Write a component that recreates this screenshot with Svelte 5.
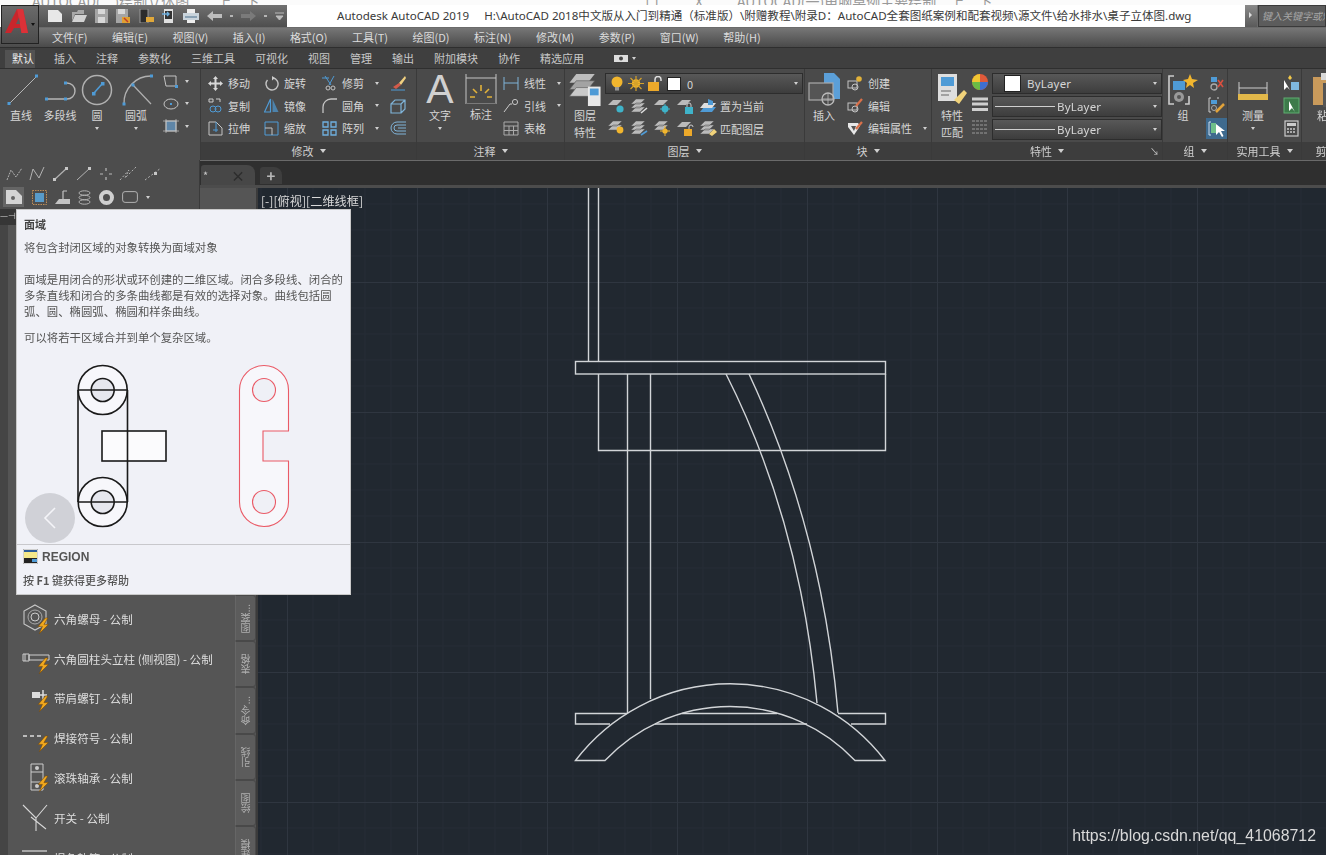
<script lang="ts">
  const menus = ['文件(F)', '编辑(E)', '视图(V)', '插入(I)', '格式(O)', '工具(T)', '绘图(D)', '标注(N)', '修改(M)', '参数(P)', '窗口(W)', '帮助(H)'];
  const tabs = ['默认', '插入', '注释', '参数化', '三维工具', '可视化', '视图', '管理', '输出', '附加模块', '协作', '精选应用'];
  const sideTabs = [
    { label: '图案...', h: 46 },
    { label: '表格', h: 46 },
    { label: '命令...', h: 47 },
    { label: '引线', h: 46 },
    { label: '绘图', h: 46 },
    { label: '建模', h: 46 }
  ];
  const paletteItems = [
    { label: '六角螺母 - 公制', kind: 'nut' },
    { label: '六角圆柱头立柱 (侧视图) - 公制', kind: 'post' },
    { label: '带肩螺钉 - 公制', kind: 'screw' },
    { label: '焊接符号 - 公制', kind: 'weld' },
    { label: '滚珠轴承 - 公制', kind: 'bearing' },
    { label: '开关 - 公制', kind: 'switch' },
    { label: '堤角轨算 - 公制', kind: 'last' }
  ];
</script>

{#snippet caret()}
  <i class="caret"></i>
{/snippet}

{#snippet bolt()}
  <path d="M7 0 L1 7 L4.5 7 L2 13 L9.5 5.5 L5.8 5.5 L9 0 Z" fill="#f0a81e" stroke="#7a4c08" stroke-width="0.5" />
{/snippet}

<div class="app">
  <div class="behind">
    <span class="behind-a">AUTOCAD(二)绘制立体图　　上　下</span>
    <span class="behind-b">口</span>
    <span class="behind-c">X</span>
    <span class="behind-d">AUTOCAD(一)电脑桌例主要绘制　上　下</span>
  </div>

  <header class="titlebar">
    <div class="qat">
      <svg width="16" height="14" viewBox="0 0 16 14"><path d="M1 1 H11 L15 5 V13 H1 Z" fill="#e8e8e8" /></svg>
      <svg width="16" height="14" viewBox="0 0 16 14"><path d="M1 3 H6 L7 1 H13 V5 H4 L1 12 Z" fill="#a9a9a9" /><path d="M4 6 H16 L13 13 H1 Z" fill="#d2d2d2" /></svg>
      <svg width="13" height="14" viewBox="0 0 13 14"><path d="M0 0 H13 V14 H0 Z" fill="#a5a5a5" /><path d="M3 0 H10 V5 H3 Z M3 8 H10 V14 H3 Z" fill="#d8d8d8" /></svg>
      <svg width="15" height="14" viewBox="0 0 15 14"><path d="M0 0 H12 V14 H0 Z" fill="#a5a5a5" /><path d="M2 0 H9 V5 H2 Z" fill="#d8d8d8" /><path d="M6 8 L14 8 L14 14 L6 14 Z" fill="#e0a030" /><path d="M8 9 L12 13" stroke="#c0392b" stroke-width="1.4" /></svg>
      <svg width="15" height="14" viewBox="0 0 15 14"><path d="M1 0 H9 V14 H1 Z" fill="#2c2c2c" stroke="#999" /><path d="M7 8 H15 V13 H7 Z" fill="#e0a83a" /></svg>
      <svg width="13" height="14" viewBox="0 0 13 14"><path d="M2 0 H11 V14 H2 Z" fill="#e0e0e0" /><path d="M3 2 H10 V10 H3 Z" fill="#333" /><path d="M0 5 H7 M5 3 L7 5 L5 7" stroke="#6fb0e0" stroke-width="1.4" fill="none" /></svg>
      <svg width="16" height="14" viewBox="0 0 16 14"><path d="M4 0 H12 V4 H4 Z M4 10 H12 V14 H4 Z" fill="#eee" /><path d="M0 4 H16 V11 H0 Z" fill="#c9d4dc" /><path d="M2 8 H14" stroke="#6d8ca3" stroke-width="1.4" /></svg>
      <svg width="15" height="10" viewBox="0 0 15 10"><path d="M6 0 L0 5 L6 10 V7 H15 V3 H6 Z" fill="#bdbdbd" /></svg>
      <i class="dot"></i>
      <svg width="15" height="10" viewBox="0 0 15 10"><path d="M9 0 L15 5 L9 10 V7 H0 V3 H9 Z" fill="#7a7a7a" /></svg>
      <i class="dot"></i>
      <svg width="9" height="9" viewBox="0 0 9 9"><path d="M0 1 H9 M1 4 H8 L4.5 8 Z" stroke="#bbb" fill="#bbb" /></svg>
    </div>
    <div class="doc-title">Autodesk AutoCAD 2019&nbsp;&nbsp;&nbsp;&nbsp; H:\AutoCAD 2018中文版从入门到精通（标准版）\附赠教程\附录D：AutoCAD全套图纸案例和配套视频\源文件\给水排水\桌子立体图.dwg</div>
    <div class="search-wrap">
      <div class="search-arrow"></div>
      <div class="search">键入关键字或短语</div>
    </div>
  </header>

  <button class="app-btn" aria-label="应用程序菜单">
    <svg width="24" height="26" viewBox="0 0 24 26"><path d="M0 25 L12 1 H18 L23 25 H16.5 L15.6 20 H9 L6 25 Z" fill="#c8262c" /><path d="M12 1 H18 L23 25 H16.5 Z" fill="#dc3138" /><path d="M11 16 H15 L14 9.5 Z" fill="#5c5c5c" /></svg>
    <i class="caret dark"></i>
  </button>

  <nav class="menubar">
    {#each menus as m}<span>{m}</span>{/each}
  </nav>

  <nav class="tabbar">
    {#each tabs as t, i}<span class:active={i === 0}>{t}</span>{/each}
    <svg class="cam" width="14" height="8" viewBox="0 0 14 8"><path d="M0 1 H14 V8 H0 Z" fill="#ddd" /><circle cx="7" cy="4.5" r="2" fill="#444" /></svg>
    <i class="caret"></i>
  </nav>

  <section class="ribbon">
    <!-- 绘图 -->
    <div class="panel p-draw">
      <div class="body draw-body">
        <div class="big w40">
          <svg width="34" height="34" viewBox="0 0 34 34" class="i"><path d="M5 31 L33 3" stroke="#b5b5b5" /><rect x="3.5" y="29" width="3" height="3" fill="#4f9bd6" stroke="none" /><rect x="31" y="1.5" width="3" height="3" fill="#4f9bd6" stroke="none" /></svg>
          <span>直线</span>
        </div>
        <div class="big w38">
          <svg width="34" height="34" viewBox="0 0 34 34" class="i"><path d="M3 26 H24 A8 8 0 0 0 24 10 H22" stroke="#b5b5b5" stroke-width="1.4" /><rect x="2" y="24.5" width="3" height="3" fill="#4f9bd6" stroke="none" /><rect x="21" y="24.5" width="3" height="3" fill="#4f9bd6" stroke="none" /><rect x="21" y="8.5" width="3" height="3" fill="#4f9bd6" stroke="none" /></svg>
          <span>多段线</span>
        </div>
        <div class="big w36">
          <svg width="32" height="32" viewBox="0 0 32 32" class="i"><circle cx="16" cy="16" r="14.5" stroke="#b0b0b0" stroke-width="1.5" /><path d="M13 19 L21 10" stroke="#4f9bd6" stroke-width="1.6" /><rect x="11" y="18" width="3.5" height="3.5" fill="#4f9bd6" stroke="none" /><rect x="20" y="8" width="3.5" height="3.5" fill="#4f9bd6" stroke="none" /></svg>
          <span>圆</span>{@render caret()}
        </div>
        <div class="big w42">
          <svg width="34" height="34" viewBox="0 0 34 34" class="i"><path d="M5 31 A27 27 0 0 1 32 3" stroke="#b0b0b0" stroke-width="1.4" /><path d="M14 12 L32 31" stroke="#b0b0b0" stroke-width="1.2" /><rect x="3.5" y="29.5" width="3" height="3" fill="#4f9bd6" stroke="none" /><rect x="31" y="1.5" width="3" height="3" fill="#4f9bd6" stroke="none" /><rect x="12.5" y="10.5" width="3" height="3" fill="#4f9bd6" stroke="none" /></svg>
          <span>圆弧</span>{@render caret()}
        </div>
        <div class="draw-small">
          <div>
            <svg width="16" height="14" viewBox="0 0 16 14" class="i"><path d="M1 2 H13 V12 H3 Z" /><rect x="12" y="11" width="3" height="3" fill="#4f9bd6" stroke="none" /></svg>
            {@render caret()}
          </div>
          <div>
            <svg width="16" height="14" viewBox="0 0 16 14" class="i"><ellipse cx="8" cy="7" rx="7" ry="5" /><rect x="7" y="6" width="2" height="2" fill="#4f9bd6" stroke="none" /></svg>
            {@render caret()}
          </div>
          <div>
            <svg width="16" height="14" viewBox="0 0 16 14" class="i"><rect x="3" y="2" width="10" height="10" fill="#5f86a8" stroke="#bbb" /><path d="M0 2 H16 M0 12 H16 M3 0 V14 M13 0 V14" stroke-width="0.7" /></svg>
            {@render caret()}
          </div>
        </div>
      </div>
    </div>

    <!-- 修改 -->
    <div class="panel p-modify">
      <div class="body modify-grid">
        <div class="tool"><svg width="15" height="15" viewBox="0 0 15 15"><path d="M7.5 0 L10 3 H8.5 V6.5 H12 V5 L15 7.5 L12 10 V8.5 H8.5 V12 H10 L7.5 15 L5 12 H6.5 V8.5 H3 V10 L0 7.5 L3 5 V6.5 H6.5 V3 H5 Z" fill="#d8d8d8" /></svg><span>移动</span></div>
        <div class="tool"><svg width="15" height="15" viewBox="0 0 15 15" class="i"><path d="M9 2 A6 6 0 1 1 3.5 4" stroke-width="1.4" /><path d="M8 0 L11 2 L8 4.5 Z" fill="#ccc" stroke="none" /></svg><span>旋转</span></div>
        <div class="tool"><svg width="15" height="15" viewBox="0 0 15 15" class="i"><path d="M0 2 H7 M3 0 L9 9 M12 0 L7 9" stroke="#4f9bd6" /><circle cx="6" cy="12" r="2" /><circle cx="11" cy="12" r="2" /></svg><span>修剪</span>{@render caret()}</div>
        <svg class="i lone" width="16" height="16" viewBox="0 0 16 16"><path d="M9 8 L15 1 L16 3 L11 10 Z" fill="#f0d080" stroke="none" /><path d="M3 12 L9 8 L11 10 L6 14 Z" fill="#d25a4a" stroke="none" /><path d="M1 15 H15" stroke="#4f9bd6" /></svg>

        <div class="tool"><svg width="15" height="15" viewBox="0 0 15 15" class="i"><path d="M1 1 H5 V4 H1 Z M8 1 H12 M12 1 V4" stroke="#ccc" /><circle cx="5" cy="11" r="3" stroke="#4f9bd6" /><circle cx="10" cy="11" r="3" stroke="#4f9bd6" /></svg><span>复制</span></div>
        <div class="tool"><svg width="15" height="15" viewBox="0 0 15 15"><path d="M6.5 1 L0.5 14 H6.5 Z" fill="none" stroke="#4f9bd6" stroke-width="1.2" /><path d="M8.5 1 V14 H14.5 Z" fill="#4f9bd6" opacity="0.7" /></svg><span>镜像</span></div>
        <div class="tool"><svg width="15" height="15" viewBox="0 0 15 15" class="i"><path d="M1 15 V9 A8 8 0 0 1 9 1 H15" stroke-width="1.3" /></svg><span>圆角</span>{@render caret()}</div>
        <svg class="i lone" width="16" height="16" viewBox="0 0 16 16"><path d="M1 6 H11 V15 H1 Z M1 6 L5 2 H15 V11 L11 15 M11 6 L15 2" stroke="#7fb3d8" stroke-width="1.2" /></svg>

        <div class="tool"><svg width="15" height="15" viewBox="0 0 15 15" class="i"><path d="M1 1 H8 L14 7 V14 H1 Z" /><path d="M8 1 V7 M5 9 H10 M8 7 V11" stroke="#4f9bd6" /></svg><span>拉伸</span></div>
        <div class="tool"><svg width="15" height="15" viewBox="0 0 15 15" class="i"><path d="M1 1 H14 V14 H1 Z" stroke="#4f9bd6" /><path d="M1 7 H8 V14" /></svg><span>缩放</span></div>
        <div class="tool"><svg width="15" height="15" viewBox="0 0 15 15" class="i"><path d="M1 1 H6 V6 H1 Z M9 1 H14 V6 H9 Z M1 9 H6 V14 H1 Z M9 9 H14 V14 H9 Z" stroke="#6fb0e0" stroke-width="1.3" /></svg><span>阵列</span>{@render caret()}</div>
        <svg class="i lone" width="16" height="16" viewBox="0 0 16 16"><path d="M16 2 H7 A6 6 0 0 0 7 14 H16 M16 5 H7 A3 3 0 0 0 7 11 H16 M16 8 H8" stroke="#7fb3d8" /></svg>
      </div>
      <div class="foot">修改 {@render caret()}</div>
    </div>

    <!-- 注释 -->
    <div class="panel p-annot">
      <div class="body annot-body">
        <div class="big w40">
          <span class="letter">A</span>
          <span>文字</span>{@render caret()}
        </div>
        <div class="big w42">
          <svg class="dim" width="32" height="30" viewBox="0 0 32 30"><g fill="none" stroke="#c4c4c4"><path d="M1 0 V30 M31 0 V30 M1 4 H31" /><path d="M1 29.5 H31" stroke="#7a7a7a" /></g><path d="M16 11 V17 M8 15 L12 19 M24 15 L20 19 M5 23 H10 M22 23 H27" stroke="#e2b23a" stroke-width="1.6" /></svg>
          <span>标注</span>
        </div>
        <div class="annot-col">
          <div class="tool"><svg width="16" height="15" viewBox="0 0 16 15" class="i"><path d="M1 1 V14 M15 1 V14 M1 7 H15" stroke="#7fb3d8" /></svg><span>线性</span>{@render caret()}</div>
          <div class="tool"><svg width="16" height="15" viewBox="0 0 16 15" class="i"><path d="M1 14 L7 6 H9" stroke="#ccc" /><circle cx="12" cy="4" r="2.6" /></svg><span>引线</span>{@render caret()}</div>
          <div class="tool"><svg width="16" height="15" viewBox="0 0 16 15" class="i"><path d="M1 1 H15 V14 H1 Z M1 5 H15 M1 9.5 H15 M6 5 V14 M10.5 5 V14" stroke="#aaa" /></svg><span>表格</span></div>
        </div>
      </div>
      <div class="foot">注释 {@render caret()}</div>
    </div>

    <!-- 图层 -->
    <div class="panel p-layer">
      <div class="body layer-body">
        <div class="big w36 two-line">
          <svg width="33" height="35" viewBox="0 0 33 35"><path d="M0 10 L7 1 H26 L19 10 Z" fill="#bdbdbd" /><path d="M0 17 L7 8 H26 L19 17 Z" fill="#a3a3a3" stroke="#555" stroke-width=".6" /><path d="M0 24 L7 15 H26 L19 24 Z" fill="#c9c9c9" stroke="#555" stroke-width=".6" /><rect x="19" y="14" width="13" height="20" fill="#e8e8e8" /><rect x="21" y="16" width="9" height="7" fill="#4f9bd6" /></svg>
          <span>图层</span><span>特性</span>
        </div>
        <div class="layer-main">
          <div class="combo wide">
            <svg width="14" height="15" viewBox="0 0 14 15"><circle cx="7" cy="6" r="5.5" fill="#f2b62e" /><rect x="5" y="11" width="4" height="3.5" fill="#999" /></svg>
            <svg width="16" height="15" viewBox="0 0 16 15"><circle cx="8" cy="7.5" r="4.2" fill="#f2b62e" /><path d="M8 0 V15 M0 7.5 H16 M2.5 2 L13.5 13 M13.5 2 L2.5 13" stroke="#d6a22a" stroke-width="1.2" /></svg>
            <svg width="15" height="15" viewBox="0 0 15 15"><rect x="0" y="6" width="11" height="9" fill="#eda92a" /><path d="M7 6 V3.5 A3 3 0 0 1 13 3.5 V5" fill="none" stroke="#ddd" stroke-width="1.5" /></svg>
            <i class="swatch"></i>
            <span>0</span>
            <i class="caret end"></i>
          </div>
          <div class="layer-row">
            <svg width="17" height="15" viewBox="0 0 17 15"><path d="M0 6 L5 1 H14 L9 6 Z" fill="#bbb" /><circle cx="12" cy="10" r="3.6" fill="#3fb3c9" /></svg>
            <svg width="17" height="15" viewBox="0 0 17 15"><path d="M0 5 L5 0 H14 L9 5 Z M0 9 L5 4 H14 L9 9 Z M0 13 L5 8 H14 L9 13 Z" fill="#bbb" stroke="#555" stroke-width=".5" /><path d="M10 14 L16 9" stroke="#ddd" stroke-width="1.6" /></svg>
            <svg width="17" height="15" viewBox="0 0 17 15"><path d="M0 6 L5 1 H14 L9 6 Z" fill="#bbb" /><circle cx="11" cy="10" r="3.4" fill="#3fb3c9" /><path d="M11 5 V15 M6 10 H16" stroke="#3fb3c9" /></svg>
            <svg width="17" height="15" viewBox="0 0 17 15"><path d="M0 6 L5 1 H14 L9 6 Z" fill="#bbb" /><rect x="8" y="8" width="8" height="7" fill="#3fb3c9" /><path d="M10 8 V6 A2 2 0 0 1 14 6 V8" fill="none" stroke="#ccc" /></svg>
            <div class="tool"><svg width="17" height="15" viewBox="0 0 17 15"><path d="M0 13 L4 8 H16 L12 13 Z" fill="#4f9bd6" /><path d="M0 9 L4 4 H16 L12 9 Z" fill="#dfdfdf" /><path d="M8 0 L13 2 V6 H8 Z" fill="#4f9bd6" /></svg><span>置为当前</span></div>
          </div>
          <div class="layer-row">
            <svg width="17" height="15" viewBox="0 0 17 15"><path d="M0 5 L5 0 H14 L9 5 Z M0 9 L5 4 H14 L9 9 Z" fill="#bbb" stroke="#555" stroke-width=".5" /><circle cx="12" cy="9" r="3.4" fill="#f2b62e" /></svg>
            <svg width="17" height="15" viewBox="0 0 17 15"><path d="M0 5 L5 0 H14 L9 5 Z M0 9 L5 4 H14 L9 9 Z M0 13 L5 8 H14 L9 13 Z" fill="#bbb" stroke="#555" stroke-width=".5" /><path d="M10 14 L16 10" stroke="#4f9bd6" stroke-width="1.6" /></svg>
            <svg width="17" height="15" viewBox="0 0 17 15"><path d="M0 5 L5 0 H14 L9 5 Z M0 9 L5 4 H14 L9 9 Z" fill="#bbb" stroke="#555" stroke-width=".5" /><circle cx="11" cy="10" r="2.6" fill="#f2b62e" /><path d="M11 5 V15 M6 10 H16" stroke="#f2b62e" /></svg>
            <svg width="17" height="15" viewBox="0 0 17 15"><path d="M0 6 L5 1 H14 L9 6 Z" fill="#bbb" /><rect x="7" y="8" width="8" height="7" fill="#eda92a" /><path d="M12 8 V6 A2 2 0 0 1 16 6" fill="none" stroke="#ccc" /></svg>
            <div class="tool"><svg width="17" height="15" viewBox="0 0 17 15"><path d="M0 5 L5 0 H14 L9 5 Z M0 9 L5 4 H14 L9 9 Z M0 13 L5 8 H14 L9 13 Z" fill="#bbb" stroke="#555" stroke-width=".5" /><path d="M9 13 L14 8 L17 11 L12 15 Z" fill="#f0d27a" /></svg><span>匹配图层</span></div>
          </div>
        </div>
      </div>
      <div class="foot">图层 {@render caret()}</div>
    </div>

    <!-- 块 -->
    <div class="panel p-block">
      <div class="body block-body">
        <div class="big w36">
          <svg width="32" height="34" viewBox="0 0 32 34"><path d="M16 0 H26 L32 6 V26 H16 Z" fill="#5b9fd8" /><rect x="1" y="10" width="24" height="17" fill="#555" stroke="#aaa" stroke-width="1.2" /><circle cx="20" cy="26" r="6" fill="none" stroke="#bbb" stroke-width="1.3" /><path d="M20 20 V32 M14 26 H26" stroke="#bbb" stroke-width=".8" /></svg>
          <span>插入</span>
        </div>
        <div class="annot-col block-col">
          <div class="tool"><svg width="16" height="15" viewBox="0 0 16 15" class="i"><rect x="1" y="5" width="9" height="7" /><circle cx="8" cy="11" r="3" /><circle cx="12" cy="3" r="2.8" fill="#e2b23a" stroke="none" /></svg><span>创建</span></div>
          <div class="tool"><svg width="16" height="15" viewBox="0 0 16 15" class="i"><rect x="1" y="5" width="9" height="7" /><circle cx="8" cy="11" r="3" /><path d="M9 8 L15 1" stroke="#d9704a" stroke-width="2.2" /></svg><span>编辑</span></div>
          <div class="tool"><svg width="16" height="15" viewBox="0 0 16 15"><path d="M1 2 H11 L13 5 L7 14 L1 6 Z" fill="#e8e8e8" /><path d="M4 5 H9 L7 10 Z" fill="#555" /><path d="M9 8 L15 1" stroke="#d9704a" stroke-width="2.2" /></svg><span>编辑属性</span>{@render caret()}</div>
        </div>
      </div>
      <div class="foot">块 {@render caret()}</div>
    </div>

    <!-- 特性 -->
    <div class="panel p-props">
      <div class="body props-body">
        <div class="big w38 two-line">
          <svg width="29" height="32" viewBox="0 0 29 32"><rect x="0" y="0" width="19" height="27" fill="#dedede" /><rect x="3" y="3" width="13" height="9" fill="#4f9bd6" /><path d="M3 17 H13 M3 21 H11" stroke="#666" /><path d="M16 26 L26 16 L29 19 L21 30 Z" fill="#f0d27a" /></svg>
          <span>特性</span><span>匹配</span>
        </div>
        <div class="props-icons">
          <svg width="16" height="16" viewBox="0 0 16 16"><circle cx="8" cy="8" r="8" fill="#e05a3a" /><path d="M8 8 L16 8 A8 8 0 0 1 8 16 Z" fill="#3f6fd0" /><path d="M8 8 L8 16 A8 8 0 0 1 0 8 Z" fill="#6bbb45" /><path d="M8 8 L0 8 A8 8 0 0 1 8 0 Z" fill="#f0c632" /></svg>
          <svg width="16" height="16" viewBox="0 0 16 16"><path d="M0 2 H16 M0 7 H16 M0 12.5 H16" stroke="#d0d0d0" stroke-width="3" /></svg>
          <svg width="16" height="16" viewBox="0 0 16 16"><path d="M0 2 H16 M0 6 H16 M0 10 H16 M0 14 H16" stroke="#999" stroke-dasharray="3 1" /></svg>
        </div>
        <div class="props-combos">
          <div class="combo"><i class="swatch large"></i><span class="bylayer first">ByLayer</span><i class="caret end"></i></div>
          <div class="combo"><i class="ltype"></i><span class="bylayer">ByLayer</span><i class="caret end"></i></div>
          <div class="combo"><i class="ltype"></i><span class="bylayer">ByLayer</span><i class="caret end"></i></div>
        </div>
      </div>
      <div class="foot">特性 {@render caret()}<i class="launcher">↘</i></div>
    </div>

    <!-- 组 -->
    <div class="panel p-group">
      <div class="body group-body">
        <div class="big w36">
          <svg width="30" height="32" viewBox="0 0 30 32"><path d="M6 2 H1 V30 H6 M17 30 H21 V22" fill="none" stroke="#ccc" stroke-width="1.6" /><rect x="5" y="7" width="12" height="9" fill="#4f9bd6" /><circle cx="11" cy="23" r="5" fill="#999" /><circle cx="11" cy="23" r="2" fill="#555" /><path d="M22 0 L24 5 L30 6 L25 9 L26 14 L22 11 L18 14 L19 9 L15 6 L20 5 Z" fill="#f2b62e" /></svg>
          <span>组</span>
        </div>
        <div class="group-col">
          <svg width="15" height="17" viewBox="0 0 15 17"><rect x="2" y="2" width="6" height="5" fill="#4f9bd6" /><circle cx="5" cy="12" r="3" fill="none" stroke="#aaa" stroke-width="1.3" /><path d="M9 5 L14 12 M14 5 L9 12" stroke="#d85040" stroke-width="1.6" /></svg>
          <svg width="17" height="17" viewBox="0 0 17 17"><path d="M3 1 H1 V15 H3 M9 1 H11" fill="none" stroke="#ccc" /><rect x="3" y="3" width="6" height="4" fill="#4f9bd6" /><circle cx="6" cy="11" r="2.5" fill="none" stroke="#aaa" /><path d="M8 15 L16 7" stroke="#e2a33a" stroke-width="2.5" /></svg>
          <span class="hl"><svg width="19" height="19" viewBox="0 0 19 19"><path d="M4 3 H2 V16 H4" fill="none" stroke="#cde" /><rect x="4" y="4" width="5" height="10" fill="#6fc08a" /><path d="M9 5 V16 L12 13 L15 18 L16.5 17 L14 12 H18 Z" fill="#fff" /></svg></span>
        </div>
      </div>
      <div class="foot">组 {@render caret()}</div>
    </div>

    <!-- 实用工具 -->
    <div class="panel p-util">
      <div class="body util-body">
        <div class="big w46">
          <svg width="30" height="20" viewBox="0 0 30 20" class="ruler"><path d="M1 1 V14 M29 1 V14 M1 7 H29" stroke="#ccc" fill="none" /><rect x="0" y="13" width="30" height="6" fill="#e2b84a" /></svg>
          <span>测量</span>{@render caret()}
        </div>
        <div class="group-col">
          <svg width="17" height="17" viewBox="0 0 17 17"><path d="M7 0 L9 3 L7 5 L5 3 Z" fill="#f2c84a" /><path d="M1 5 V15 L4 12 L7 15 Z" fill="#fff" /><rect x="8" y="7" width="8" height="8" fill="#7fb8e0" /></svg>
          <svg width="17" height="17" viewBox="0 0 17 17"><rect x="1" y="1" width="15" height="15" fill="#3d7a4a" stroke="#5fae70" /><path d="M6 4 V14 L9 11 L12 15 Z" fill="#fff" /></svg>
          <svg width="15" height="17" viewBox="0 0 15 17"><rect x="1" y="1" width="13" height="15" fill="none" stroke="#ccc" stroke-width="1.2" /><rect x="3" y="3" width="9" height="3" fill="#ccc" /><path d="M3 9 H12 M3 12 H12" stroke="#ccc" stroke-dasharray="2 1" stroke-width="1.6" /></svg>
        </div>
      </div>
      <div class="foot">实用工具 {@render caret()}</div>
    </div>

    <!-- 剪贴板 -->
    <div class="panel p-clip">
      <div class="body clip-body">
        <div class="big w46">
          <svg width="30" height="34" viewBox="0 0 30 34"><rect x="0" y="4" width="24" height="28" fill="#c99a5b" /><rect x="8" y="0" width="16" height="7" fill="#d8d8d8" /><rect x="10" y="10" width="20" height="24" fill="#555" /></svg>
          <span>粘贴</span>{@render caret()}
        </div>
      </div>
      <div class="foot">剪贴板</div>
    </div>
  </section>

  <div class="filetabs">
    <div class="ftab"><span>*</span><b>×</b></div>
    <div class="ftab plus">+</div>
  </div>

  <main class="work">
    <aside class="palette">
      <div class="palette-edge"></div>
      <div class="palette-list">
        {#each paletteItems as item}
          <div class="pal-item">
            <svg class="pal-ico" width="30" height="30" viewBox="0 0 30 30">
              {#if item.kind === 'nut'}
                <path d="M13 1 L24 7 V20 L13 26 L2 20 V7 Z" fill="none" stroke="#c8c8c8" stroke-width="1.1" />
                <circle cx="13" cy="13" r="7" fill="none" stroke="#aaa" /><circle cx="13" cy="13" r="4" fill="none" stroke="#ccc" />
              {:else if item.kind === 'post'}
                <path d="M1 10 H7 V17 H1 Z M7 11 H27 V16 H7 Z M3 10 V17" fill="none" stroke="#cfcfcf" />
              {:else if item.kind === 'screw'}
                <rect x="10" y="9" width="8" height="6" fill="#ddd" /><path d="M18 12 H25 M21 7 V17" stroke="#ddd" stroke-width="1.5" />
              {:else if item.kind === 'weld'}
                <path d="M1 13 H5 M8 13 H12 M15 13 H19" stroke="#ddd" stroke-width="1.4" />
              {:else if item.kind === 'bearing'}
                <path d="M9 1 H21 V27 H9 Z M9 9 H21 M9 19 H21" fill="none" stroke="#ccc" /><circle cx="15" cy="5" r="2" fill="#ccc" /><circle cx="15" cy="23" r="2" fill="#ccc" />
              {:else if item.kind === 'switch'}
                <path d="M1 2 L14 15 V28 M25 2 L14 15 M9 14 L24 26" fill="none" stroke="#d8d8d8" stroke-width="1.1" />
              {:else}
                <path d="M0 8 H25" stroke="#ccc" stroke-width="1.4" />
              {/if}
              {#if item.kind !== 'switch' && item.kind !== 'last'}
                <g transform="translate(15 {item.kind === 'nut' ? 14 : item.kind === 'post' ? 14 : 13}) scale(1.2)">{@render bolt()}</g>
              {/if}
            </svg>
            <span>{item.label}</span>
          </div>
        {/each}
      </div>
      <div class="side-tabs">
        {#each sideTabs as s}
          <div class="side-tab" style="height: {s.h}px"><span>{s.label}</span></div>
        {/each}
      </div>
    </aside>

    <div class="canvas">
      <svg class="dwg" width="1068" height="667" viewBox="258 188 1068 667">
        <defs>
          <pattern id="grid" x="677" y="412" width="130" height="130" patternUnits="userSpaceOnUse">
            <path d="M26 0 V130 M52 0 V130 M78 0 V130 M104 0 V130 M0 26 H130 M0 52 H130 M0 78 H130 M0 104 H130" stroke="#252c35" stroke-width="1" />
            <path d="M0.5 0 V130 M0 0.5 H130" stroke="#2f3640" stroke-width="1" />
          </pattern>
        </defs>
        <rect x="258" y="188" width="1068" height="667" fill="url(#grid)" />
        <g fill="none" stroke="#d2d5d8" stroke-width="1.4">
          <path d="M588.5 188 V361.5 M598.5 188 V361.5" />
          <rect x="575.5" y="361.5" width="310" height="12.5" />
          <path d="M598.5 374 V450.5 H885.5 V374" />
          <path d="M627.5 374 V713 M650.5 374 V699" />
          <path d="M726 374 Q800 520 817 703" />
          <path d="M749 374 Q822 530 838 713" />
          <path d="M575.5 760.5 A194.5 194.5 0 0 1 885 760.5 H855 A171.7 171.7 0 0 0 605 760.5 Z" />
          <path d="M627 713.5 H575.5 V724 H610 M682 713.5 H777 M655 724 H807 M838 713.5 H885.5 V724 H851" />
        </g>
      </svg>
      <div class="view-label">[-][俯视][二维线框]</div>
      <div class="watermark">https://blog.csdn.net/qq_41068712</div>
    </div>
  </main>

  <!-- 绘图面板展开部分 -->
  <div class="draw-ext">
    <div class="ext-row">
      <svg width="18" height="16" viewBox="0 0 18 16" class="i"><path d="M1 14 L5 4 L10 11 L16 2" stroke-dasharray="2 1" /></svg>
      <svg width="18" height="16" viewBox="0 0 18 16" class="i"><path d="M1 14 L4 3 L10 12 L15 1" /></svg>
      <svg width="18" height="16" viewBox="0 0 18 16" class="i"><path d="M2 14 L15 2" stroke-width="1.2" /><rect x="1" y="12" width="3" height="3" fill="#ddd" stroke="none" /><rect x="13" y="1" width="3" height="3" fill="#ddd" stroke="none" /></svg>
      <svg width="18" height="16" viewBox="0 0 18 16" class="i"><path d="M2 14 L15 2" /><rect x="13" y="1" width="3" height="3" fill="#ddd" stroke="none" /></svg>
      <svg width="16" height="16" viewBox="0 0 16 16"><path d="M8 2 V5 M8 11 V14 M2 8 H5 M11 8 H14" stroke="#ccc" stroke-width="1.2" /></svg>
      <svg width="20" height="16" viewBox="0 0 20 16" class="i"><path d="M1 14 L10 4 L6 12 L17 1" stroke-dasharray="2 2" /></svg>
      <svg width="20" height="16" viewBox="0 0 20 16" class="i"><path d="M1 14 L17 2" stroke-dasharray="2 2" /><rect x="10" y="6" width="3" height="3" fill="#ddd" stroke="none" /></svg>
    </div>
    <div class="ext-row second">
      <span class="ext-active"><svg width="16" height="14" viewBox="0 0 16 14"><path d="M0 0 H10 L16 6 V14 H0 Z" fill="#e8e8e8" /><circle cx="7" cy="8" r="2" fill="#666" /></svg></span>
      <svg width="15" height="15" viewBox="0 0 15 15"><rect x="0.5" y="0.5" width="14" height="14" fill="none" stroke="#d49a5a" stroke-dasharray="1.5 1" /><rect x="3" y="3" width="9" height="9" fill="#5aa9e0" /></svg>
      <svg width="15" height="15" viewBox="0 0 15 15"><path d="M0 14 L4 9 H15 V14 Z" fill="#d8d8d8" /><path d="M8 1 V9 M8 1 H12" stroke="#d8d8d8" stroke-width="1.2" /></svg>
      <svg width="13" height="15" viewBox="0 0 13 15" class="i"><ellipse cx="6.5" cy="3" rx="5.5" ry="2.2" /><ellipse cx="6.5" cy="7.5" rx="5.5" ry="2.2" /><ellipse cx="6.5" cy="12" rx="5.5" ry="2.2" /></svg>
      <svg width="15" height="15" viewBox="0 0 15 15"><circle cx="7.5" cy="7.5" r="5.5" fill="none" stroke="#e6e6e6" stroke-width="4" /></svg>
      <svg width="16" height="12" viewBox="0 0 16 12" class="i"><rect x="0.6" y="0.6" width="14.8" height="10.8" rx="2.5" /></svg>
      {@render caret()}
    </div>
  </div>
  <div class="anchor-mark">—⊣</div>

  <!-- 工具提示 -->
  <div class="tooltip">
    <h4>面域</h4>
    <p class="lead">将包含封闭区域的对象转换为面域对象</p>
    <p class="para">面域是用闭合的形状或环创建的二维区域。闭合多段线、闭合的多条直线和闭合的多条曲线都是有效的选择对象。曲线包括圆弧、圆、椭圆弧、椭圆和样条曲线。</p>
    <p class="para2">可以将若干区域合并到单个复杂区域。</p>
    <svg class="figure" width="300" height="168" viewBox="24 362 300 168">
      <g fill="none" stroke="#1a1a1a" stroke-width="1.6">
        <path d="M78 389 V501 M127.5 389 V501 M78 389 H127.5 M78 501 H127.5" />
        <circle cx="102.7" cy="389" r="24.5" fill="#f7f7fb" />
        <circle cx="102.7" cy="389" r="11.5" fill="#e6e7ee" />
        <circle cx="102.7" cy="501" r="24.5" fill="#f7f7fb" />
        <circle cx="102.7" cy="501" r="11.5" fill="#e6e7ee" />
        <path d="M78 389 H127.5 M78 501 H127.5" />
        <rect x="102" y="430" width="64" height="30" fill="#fbfbfd" />
        <path d="M127.5 430 V460" />
      </g>
      <g fill="#f7f7fb" stroke="#ea5a66" stroke-width="1.1">
        <path d="M239.5 389 A24.5 24.5 0 0 1 288.5 389 V430 H263 V460 H288.5 V501 A24.5 24.5 0 0 1 239.5 501 Z" />
        <circle cx="264" cy="389" r="11.5" fill="#eff0f6" />
        <circle cx="264" cy="501" r="11.5" fill="#eff0f6" />
      </g>
    </svg>
    <button class="back" aria-label="上一页">
      <svg width="16" height="24" viewBox="0 0 16 24"><path d="M13 2 L3 12 L13 22" fill="none" stroke="#f4f4f8" stroke-width="1.6" /></svg>
    </button>
    <div class="tip-foot">
      <div class="cmd">
        <svg width="15" height="15" viewBox="0 0 15 15"><rect x="0" y="0" width="15" height="15" fill="#fff" stroke="#666" stroke-width=".6" /><rect x="1" y="1" width="13" height="2" fill="#2d5d9a" /><rect x="1" y="3" width="13" height="6" fill="#f4e88a" /><rect x="1" y="9" width="13" height="5" fill="#222" /><rect x="9" y="10" width="5" height="3" fill="#4f9bd6" /></svg>
        <strong>REGION</strong>
      </div>
      <div class="f1">按 <b>F1</b> 键获得更多帮助</div>
    </div>
  </div>
</div>

<style>
  :global(body) {
    margin: 0;
    background: #333;
  }

  .app {
    position: relative;
    width: 1326px;
    height: 855px;
    overflow: hidden;
    display: flex;
    flex-direction: column;
    font-family: 'Noto Sans CJK SC', 'Liberation Sans', sans-serif;
    font-size: 11px;
    color: #d6d6d6;
    filter: blur(0.55px);
  }

  .i {
    fill: none;
    stroke: #c4c4c4;
    stroke-width: 1;
  }

  .caret {
    display: inline-block;
    width: 0;
    height: 0;
    border-left: 2.5px solid transparent;
    border-right: 2.5px solid transparent;
    border-top: 3px solid #d0d0d0;
    flex: none;
  }

  .caret.dark {
    border-top-color: #111;
  }

  .dot {
    width: 3px;
    height: 2px;
    background: #b5b5b5;
    flex: none;
  }

  /* sliver of the window behind */
  .behind {
    height: 5px;
    flex: none;
    background: #fbfbfb;
    overflow: hidden;
    position: relative;
    color: #9a9a9a;
    font-size: 14px;
  }

  .behind span {
    position: absolute;
    bottom: -4px;
    line-height: 16px;
    white-space: nowrap;
  }

  .behind-a { left: 32px; }
  .behind-b { left: 645px; }
  .behind-c { left: 695px; }
  .behind-d { left: 737px; }

  /* title row */
  .titlebar {
    height: 23px;
    flex: none;
    display: flex;
    background: #fff;
    border-bottom: 1px solid #6b6b6b;
    box-sizing: border-box;
  }

  .qat {
    width: 249px;
    margin-left: 38px;
    padding-left: 9px;
    box-sizing: border-box;
    flex: none;
    display: flex;
    align-items: center;
    gap: 8px;
    background: linear-gradient(180deg, #707070, #4e4e4e);
  }

  .doc-title {
    flex: 1;
    min-width: 0;
    padding-left: 50px;
    line-height: 22px;
    font-family: 'Noto Sans', 'Noto Sans CJK SC', sans-serif;
    font-size: 11.56px;
    color: #3a3a3a;
    white-space: nowrap;
  }

  .search-wrap {
    width: 81px;
    flex: none;
    display: flex;
    gap: 1px;
    background: #6a6a6a;
  }

  .search-arrow {
    width: 12px;
    flex: none;
    background: linear-gradient(180deg, #8a8a8a, #5a5a5a);
    position: relative;
  }

  .search-arrow::after {
    content: '';
    position: absolute;
    left: 4px;
    top: 7px;
    border-left: 3px solid #ddd;
    border-top: 3px solid transparent;
    border-bottom: 3px solid transparent;
  }

  .search {
    flex: 1;
    min-width: 0;
    overflow: hidden;
    white-space: nowrap;
    background: #5c5c5c;
    border: 1px solid #3a3a3a;
    box-sizing: border-box;
    padding-left: 3px;
    font-size: 10px;
    line-height: 19px;
    font-style: italic;
    color: #a6a6a6;
  }

  .app-btn {
    position: absolute;
    left: 1px;
    top: 5px;
    width: 38px;
    height: 39px;
    padding: 2px 0 0 3px;
    margin: 0;
    border: 1px solid #222;
    background: linear-gradient(180deg, #6a6a6a, #4c4c4c);
    display: flex;
    align-items: flex-start;
    box-sizing: border-box;
  }

  .app-btn .caret {
    margin: 15px 0 0 2px;
  }

  /* menu */
  .menubar {
    height: 20px;
    flex: none;
    display: flex;
    align-items: center;
    gap: 24.5px;
    padding: 0 0 2px 52px;
    background: linear-gradient(180deg, #767676, #4a4a4a);
    border-bottom: 1px solid #2e2e2e;
    box-sizing: border-box;
    color: #dcdcdc;
    font-size: 11px;
  }

  .tabbar {
    height: 20px;
    flex: none;
    display: flex;
    align-items: center;
    gap: 20px;
    padding-left: 12px;
    background: #3f3f3f;
    box-sizing: border-box;
    color: #c8c8c8;
  }

  .tabbar span {
    position: relative;
    line-height: 20px;
    z-index: 0;
  }

  .tabbar .active {
    color: #efefef;
  }

  .tabbar .active::before {
    content: '';
    position: absolute;
    left: -7px;
    right: -1px;
    top: 2px;
    bottom: 0;
    background: #525252;
    z-index: -1;
  }

  .cam {
    margin-left: 10px;
    margin-right: -16px;
  }

  /* ribbon */
  .ribbon {
    height: 93px;
    flex: none;
    display: flex;
    background: #4a4a4a;
    border-top: 1px solid #2f2f2f;
    border-bottom: 1px solid #6a6a6a;
    box-sizing: border-box;
  }

  .panel {
    flex: none;
    display: flex;
    flex-direction: column;
    box-sizing: border-box;
    border-right: 1px solid #3a3a3a;
  }

  .body {
    height: 73px;
    flex: none;
    box-sizing: border-box;
  }

  .foot {
    flex: 1;
    display: flex;
    align-items: center;
    justify-content: center;
    gap: 6px;
    background: #3d3d3d;
    color: #cfcfcf;
    position: relative;
  }

  .foot .caret {
    border-left-width: 3.5px;
    border-right-width: 3.5px;
    border-top-width: 4px;
  }

  .launcher {
    position: absolute;
    right: 3px;
    top: 3px;
    font-style: normal;
    font-size: 9px;
    color: #ccc;
  }

  .p-draw { width: 201px; background: #4d4d4d; }
  .p-modify { width: 216px; }
  .p-annot { width: 148px; }
  .p-layer { width: 240px; }
  .p-block { width: 127px; }
  .p-props { width: 231px; }
  .p-group { width: 65px; }
  .p-util { width: 74px; }
  .p-clip { width: 60px; border-right: 0; }

  .big {
    flex: none;
    display: flex;
    flex-direction: column;
    align-items: center;
    padding-top: 4px;
    box-sizing: border-box;
    color: #d6d6d6;
    line-height: 15px;
  }

  .big svg {
    height: 34px;
    flex: none;
    margin-bottom: 1px;
  }

  .big .caret {
    margin-top: 4px;
  }

  .two-line {
    line-height: 17px;
  }

  .two-line svg {
    margin-bottom: 0;
  }

  .w36 { width: 36px; }
  .w38 { width: 38px; }
  .w40 { width: 40px; }
  .w42 { width: 42px; }
  .w46 { width: 46px; }

  .draw-body {
    display: flex;
    padding-left: 1px;
  }

  .draw-small {
    margin-left: 6px;
    padding-top: 5px;
    display: flex;
    flex-direction: column;
    gap: 8.5px;
  }

  .draw-small div {
    display: flex;
    align-items: center;
    gap: 6px;
  }

  .modify-grid {
    display: grid;
    grid-template-columns: 56px 58px 68px 20px;
    grid-template-rows: repeat(3, 22.5px);
    padding: 3px 0 0 7px;
    align-items: center;
  }

  .tool {
    display: flex;
    align-items: center;
    gap: 5px;
    white-space: nowrap;
    color: #d6d6d6;
  }

  .tool svg {
    flex: none;
  }

  .tool .caret {
    margin-left: 6px;
  }

  .annot-body {
    display: flex;
    padding-left: 3px;
  }

  .annot-body .big {
    padding-top: 2px;
  }

  .big svg.dim {
    height: 30px;
    margin: 3px 0;
  }

  .letter {
    font-family: 'Liberation Sans', sans-serif;
    font-size: 41px;
    line-height: 37px;
    color: #d0d0d0;
    height: 37px;
  }

  .annot-col {
    padding-top: 3px;
    display: grid;
    grid-template-rows: repeat(3, 22.5px);
    align-items: center;
    margin-left: 1px;
  }

  .layer-body {
    display: flex;
    padding-left: 2px;
    gap: 0;
  }

  .layer-main {
    padding: 4px 0 0 2px;
    width: 198px;
  }

  .combo {
    height: 21px;
    display: flex;
    align-items: center;
    background: linear-gradient(180deg, #585858, #3d3d3d);
    border: 1px solid #2d2d2d;
    box-sizing: border-box;
    position: relative;
    margin-bottom: 2px;
  }

  .combo .end {
    position: absolute;
    right: 4px;
    top: 8px;
  }

  .combo.wide {
    gap: 4px;
    padding-left: 4px;
    margin-bottom: 1px;
  }

  .combo.wide span {
    margin-left: 2px;
  }

  .swatch {
    width: 12px;
    height: 12px;
    background: #fff;
    border: 1px solid #222;
    flex: none;
  }

  .swatch.large {
    width: 15px;
    height: 15px;
    margin-left: 11px;
  }

  .layer-row {
    height: 22.5px;
    display: flex;
    align-items: center;
    gap: 6px;
    padding-left: 3px;
  }

  .layer-row .tool {
    gap: 3px;
  }

  .block-body {
    display: flex;
    padding-left: 1px;
  }

  .block-col {
    margin-left: 5px;
  }

  .props-body {
    display: flex;
    padding-left: 1px;
  }

  .props-icons {
    padding: 5px 0 0 1px;
    display: flex;
    flex-direction: column;
    gap: 6.5px;
    width: 20px;
    flex: none;
  }

  .props-combos {
    padding-top: 4px;
    width: 170px;
  }

  .bylayer {
    font-size: 11.5px;
    font-family: 'Noto Sans', 'Liberation Sans', sans-serif;
    letter-spacing: 0.2px;
  }

  .bylayer.first {
    margin-left: 6px;
  }

  .ltype {
    width: 60px;
    margin-left: 2px;
    margin-right: 2px;
    height: 1px;
    background: #cfcfcf;
    flex: none;
  }

  .group-body,
  .util-body {
    display: flex;
    padding-left: 2px;
  }

  .group-col {
    margin-left: 5px;
    padding-top: 3px;
    display: grid;
    grid-template-rows: repeat(3, 22.5px);
    align-items: center;
    justify-items: center;
    width: 22px;
  }

  .hl {
    width: 21px;
    height: 21px;
    background: #3e6a8e;
    display: flex;
    align-items: center;
    justify-content: center;
  }

  .big svg.ruler {
    margin-top: 8px;
    height: 20px;
    margin-bottom: 7px;
  }

  .clip-body {
    display: flex;
    padding-left: 3px;
  }

  /* file tabs */
  .filetabs {
    height: 27px;
    flex: none;
    display: flex;
    align-items: flex-end;
    gap: 5px;
    padding-left: 201px;
    background: #2f2f2f;
    border-bottom: 3px solid #4c4c4c;
    box-sizing: border-box;
  }

  .ftab {
    width: 54px;
    height: 20px;
    background: #474747;
    border-radius: 3px 8px 0 0;
    display: flex;
    justify-content: space-between;
    align-items: center;
    padding: 0 10px 0 2px;
    box-sizing: border-box;
    color: #c8c8c8;
  }

  .ftab b {
    color: #2d2d2d;
    font-size: 14px;
  }

  .ftab.plus {
    width: 22px;
    height: 17px;
    margin-bottom: 1px;
    padding: 0;
    justify-content: center;
    background: #3e3e3e;
    color: #b8b8b8;
    font-size: 15px;
    font-weight: bold;
  }

  /* main */
  .work {
    flex: 1;
    min-height: 0;
    display: flex;
  }

  .palette {
    width: 258px;
    flex: none;
    background: #555;
    display: flex;
    position: relative;
    border-right: 2px solid #3b3b3b;
    box-sizing: border-box;
  }

  .palette-edge {
    width: 8px;
    flex: none;
    background: #454545;
  }

  .palette-list {
    flex: 1;
    padding: 411px 0 0 14px;
    min-width: 0;
  }

  .pal-item {
    height: 39.8px;
    display: flex;
    align-items: center;
    gap: 2px;
    white-space: nowrap;
    color: #dedede;
    font-size: 11.6px;
  }

  .pal-ico {
    flex: none;
  }

  .side-tabs {
    width: 21px;
    flex: none;
    padding-top: 407px;
    overflow: hidden;
  }

  .side-tab {
    box-sizing: border-box;
    background: #5c5c5c;
    border: 1px solid #494949;
    border-left-color: #666;
    border-radius: 0 3px 3px 0;
    display: flex;
    align-items: center;
    justify-content: center;
  }

  .side-tab span {
    writing-mode: vertical-rl;
    transform: rotate(180deg);
    font-size: 10px;
    color: #b0b0b0;
    white-space: nowrap;
  }

  .canvas {
    flex: 1;
    min-width: 0;
    position: relative;
    background: #212830;
    overflow: hidden;
  }

  .dwg {
    display: block;
  }

  .view-label {
    position: absolute;
    left: 3px;
    top: 5px;
    font-size: 12.2px;
    color: #d8d8d8;
    line-height: 16px;
  }

  .watermark {
    position: absolute;
    right: 10px;
    bottom: 9px;
    font-family: 'Liberation Sans', sans-serif;
    font-size: 15.9px;
    line-height: 20px;
    color: #d9d9d9;
  }

  /* expanded draw panel */
  .draw-ext {
    position: absolute;
    left: 0;
    top: 160px;
    width: 200px;
    height: 49px;
    background: #4d4d4d;
    padding: 4px 0 0 6px;
    box-sizing: border-box;
    border-right: 1px solid #3a3a3a;
  }

  .ext-row {
    display: flex;
    align-items: center;
    gap: 5px;
    height: 20px;
  }

  .ext-row svg {
    opacity: 0.85;
  }

  .ext-row.second {
    gap: 8px;
    margin-top: 3px;
    margin-left: -3px;
  }

  .ext-active {
    width: 21px;
    height: 20px;
    background: #656565;
    display: flex;
    align-items: center;
    justify-content: center;
  }

  .anchor-mark {
    position: absolute;
    left: 0;
    top: 209px;
    width: 16px;
    height: 16px;
    background: #363636;
    font-size: 9px;
    line-height: 14px;
    color: #ccc;
    white-space: nowrap;
    overflow: hidden;
  }

  /* tooltip */
  .tooltip {
    position: absolute;
    left: 16px;
    top: 209px;
    width: 335px;
    height: 386px;
    background: #f0f1f7;
    box-sizing: border-box;
    border: 1px solid #c9c9c9;
    padding: 6px 7px 0;
    color: #555;
    font-size: 11.4px;
    line-height: 16px;
  }

  .tooltip h4 {
    margin: 0;
    font-size: 11px;
    font-weight: bold;
    color: #444;
    line-height: 16px;
  }

  .tooltip p {
    margin: 0;
  }

  .tooltip .lead {
    margin-top: 7px;
  }

  .tooltip .para {
    margin-top: 16px;
    width: 321px;
  }

  .tooltip .para2 {
    margin-top: 10px;
  }

  .figure {
    display: block;
    margin-top: 18px;
  }

  .back {
    position: absolute;
    left: 8px;
    top: 283px;
    width: 50px;
    height: 50px;
    padding: 0;
    border: 0;
    border-radius: 50%;
    background: rgba(205, 206, 212, 0.92);
    display: flex;
    align-items: center;
    justify-content: center;
  }

  .tip-foot {
    position: absolute;
    left: 0;
    right: 0;
    top: 334px;
    border-top: 1px solid #c8c8cc;
    padding: 2px 6px 0;
  }

  .cmd {
    display: flex;
    align-items: center;
    gap: 4px;
    height: 19px;
  }

  .cmd strong {
    font-family: 'Liberation Sans', sans-serif;
    font-size: 12px;
    color: #555;
  }

  .f1 {
    margin-top: 6px;
    font-size: 11px;
    font-weight: 500;
    color: #555;
  }
</style>
